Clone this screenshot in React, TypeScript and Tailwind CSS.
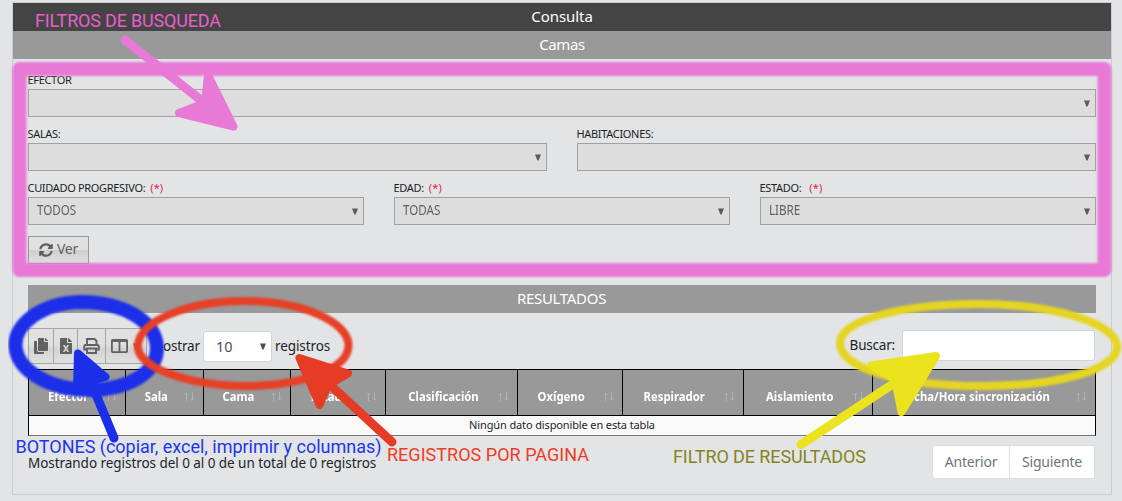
import React from 'react';
import { FaSyncAlt, FaCopy, FaFileExcel } from 'react-icons/fa';

function Caret({ className = '' }: { className?: string }) {
  return (
    <svg className={`h-[7px] w-[6px] shrink-0 ${className}`} viewBox="0 0 6 7">
      <path d="M0 0.5H6L3.6 6.5H2.4Z" fill="currentColor" />
    </svg>
  );
}

function PrintIcon() {
  return (
    <svg className="h-4 w-[17px]" viewBox="0 0 17 16" fill="none" stroke="currentColor" strokeWidth="1.9">
      <path d="M4 7V1H11.500L13.500 3V7M4 11.500H1.200V8.500Q1.200 7 2.700 7H14.300Q15.800 7 15.800 8.500V11.500H13M4 10.500H13V15H4Z" />
    </svg>
  );
}

function ColumnsIcon() {
  return (
    <svg className="h-[14px] w-[17px] shrink-0" viewBox="0 0 17 14" fill="none" stroke="currentColor" strokeWidth="1.8">
      <rect x="0.900" y="0.900" width="15.200" height="12.200" rx="0.800" />
      <path d="M1 2.200H16M8.500 2V13" />
    </svg>
  );
}

function SortIcon() {
  return (
    <svg className="mb-[5px] ml-auto mr-2 h-[9px] w-[11px] shrink-0" viewBox="0 0 11 9" fill="none" stroke="#b2b2b2" strokeWidth="1">
      <path d="M2.500 9V1M1 2.500L2.500 1L4 2.500M8.500 0V8M7 6.500L8.500 8L10 6.500" />
    </svg>
  );
}

function Field({ label, value = '', required = false, gap = 'ml-[5px]' }: {
  label: string; value?: string; required?: boolean; gap?: string;
}) {
  return (
    <div className="flex-1">
      <div className="flex h-[18px] items-center whitespace-nowrap text-[11px] leading-[18px] tracking-[-0.32px] text-[#1b1e21]">
        <span className="-ml-[0.5px]">{label}</span>
        {required && <span className={`${gap} tracking-[0.1px] text-[#d8284a]`}>(*)</span>}
      </div>
      <div className="flex h-7 items-center justify-between border border-[#a0a1a3] bg-[#dddddd] pl-2 pr-[5px] text-[13.500px] leading-[24px] text-[#5f5f5f]">
        <span className="-mt-[2px] origin-left scale-x-[.86]">{value}</span>
        <Caret className="text-[#5c5c5c]" />
      </div>
    </div>
  );
}

const columns = [
  { label: 'Efector', width: 'w-[97px]' },
  { label: 'Sala', width: 'w-[78px]' },
  { label: 'Cama', width: 'w-[87px]' },
  { label: 'Estado', width: 'w-[95px]' },
  { label: 'Clasificación', width: 'w-[132px]' },
  { label: 'Oxígeno', width: 'w-[105px]' },
  { label: 'Respirador', width: 'w-[121px]' },
  { label: 'Aislamiento', width: 'w-[129px]' },
  { label: 'Fecha/Hora sincronización', width: 'w-[223px]' },
];

const toolButton = 'flex items-center border-y border-r border-[#a4a5a7] bg-linear-to-b from-[#e0e0e1] from-45% via-[#d3d3d4] via-60% to-[#e0e0e1]';

function Annotations() {
  return (
    <svg className="pointer-events-none absolute left-0 top-0 h-[501px] w-[1122px]" viewBox="0 0 1122 501" strokeLinecap="round" strokeLinejoin="round">
      <defs>
        <filter id="soft" x="-5%" y="-15%" width="110%" height="130%"><feGaussianBlur stdDeviation="0.8" /></filter>
      </defs>
      <rect x="19.5" y="69" width="1085" height="201" fill="none" stroke="#e879d6" strokeWidth="14" filter="url(#soft)" />
      <g fill="#e879d6" stroke="#e879d6">
        <path d="M125 40L202 101" strokeWidth="9" />
        <path d="M233.5 126.500L208 75L205 103L179 113Z" strokeWidth="8" />
      </g>
      <path d="M15.500 346C14 324 42 303 80 302C123 302 157 321 157 349C156 374 128 389 91 390C50 390 17 371 15.500 346Z" fill="none" stroke="#1b2fe8" strokeWidth="14" filter="url(#soft)" />
      <g fill="#1b2fe8" stroke="#1b2fe8">
        <path d="M114 438L90 380" strokeWidth="9" />
        <path d="M78 353.500L105.500 377L92 381L77 389Z" strokeWidth="8" />
      </g>
      <path d="M138 344C142 319 191 301 244 301C303 301 348 322 348.500 345C349 369 302 386 244 386C186 385 135 367 138 344Z" fill="none" stroke="#e63f28" strokeWidth="8" filter="url(#soft)" />
      <g fill="#e63b24" stroke="#e63b24">
        <path d="M392 442L328 383" strokeWidth="9" />
        <path d="M299.500 358L348 373.500L328 385L319.500 405Z" strokeWidth="8" />
      </g>
      <path d="M840 343C840 319 906 304 978 304C1053 304 1117 323 1117 347C1117 370 1058 386 982 386C902 386 840 369 840 343Z" fill="none" stroke="#e5d524" strokeWidth="8" filter="url(#soft)" />
      <g fill="#eae31d" stroke="#eae31d">
        <path d="M801 444.500L896 382" strokeWidth="9" />
        <path d="M936 356L871 365.500L895 379L901.500 412Z" strokeWidth="8" />
      </g>
      <g fontFamily="Roboto, sans-serif" fontSize="18">
        <text x="35" y="27" textLength="186" fill="#e85fcc">FILTROS DE BUSQUEDA</text>
        <text x="15.500" y="453" textLength="366" fill="#1b36ee">BOTONES (copiar, excel, imprimir y columnas)</text>
        <text x="387" y="461" textLength="202" fill="#ee3d26">REGISTROS POR PAGINA</text>
        <text x="673" y="463" textLength="193" fill="#85851c">FILTRO DE RESULTADOS</text>
      </g>
    </svg>
  );
}

export default function App() {
  return (
    <div className="relative h-[501px] w-[1122px] overflow-hidden bg-[#e3e4e6] pl-3 pt-[2px] font-['Noto_Sans',sans-serif] text-[#212529]">
      <div className="h-[493px] w-[1100px] border border-[#cbccd0]">
        <div className="h-7 bg-[#444444] text-center text-[15px] leading-[27px] tracking-[-0.05px] text-white">Consulta</div>
        <div className="h-7 bg-[#999999] text-center text-[15px] leading-[27px] tracking-[-0.4px] text-white">Camas</div>

        <div className="px-[15px] pt-3">
          <div className="flex flex-col gap-2">
            <div className="flex"><Field label="EFECTOR" /></div>
            <div className="flex gap-[30px]"><Field label="SALAS:" /><Field label="HABITACIONES:" /></div>
            <div className="flex gap-[30px]">
              <Field label="CUIDADO PROGRESIVO:" value="TODOS" required />
              <Field label="EDAD:" value="TODAS" required />
              <Field label="ESTADO:" value="LIBRE" required gap="ml-2" />
            </div>
          </div>
          <button className="mt-[11px] flex h-7 w-[61px] items-center gap-1 border border-[#98999b] bg-linear-to-b from-[#e0e0e0] from-50% via-[#cfcfcf] via-50% to-[#dfdfdf] pl-[10px] text-[14px] leading-[24px] tracking-[-0.3px] text-[#5e5e5e]">
            <FaSyncAlt className="size-[14px]" /><span className="-mt-[2px]">Ver</span>
          </button>

          <div className="mt-[21px] h-7 bg-[#999999] text-center text-[15px] leading-[27px] tracking-[-0.3px] text-white"><span className="mr-px">RESULTADOS</span></div>

          <div className="mt-[15px] flex h-[41px] items-start">
            <div className="flex h-9 text-[#606163]">
              <div className={`${toolButton} w-[26px] border-l pl-1`}><FaCopy className="size-4" /></div>
              <div className={`${toolButton} w-6 justify-center`}><FaFileExcel className="size-4" /></div>
              <div className={`${toolButton} w-7 justify-center`}><PrintIcon /></div>
              <div className={`${toolButton} w-[41px] gap-[5px] pl-[5px]`}><ColumnsIcon /><Caret /></div>
            </div>
            <div className="ml-1 flex h-9 items-center text-[13.500px]">
              <span className="w-[52px] whitespace-nowrap tracking-[-0.2px]">Mostrar</span>
              <div className="flex h-[31px] w-[69px] items-center justify-between rounded-[3px] border border-[#ced4da] bg-white pl-3 pr-[5px] text-[14.500px] leading-[20px] text-[#495057]"><span className="-mt-px">10</span><Caret /></div>
              <span className="ml-[3px] tracking-[-0.1px]">registros</span>
            </div>
            <div className="ml-auto flex h-[35px] items-center gap-[7px] pr-px text-[13.500px]">
              <span className="tracking-[-0.2px]">Buscar:</span>
              <div className="h-[31px] w-[193px] rounded-[3px] border border-[#ced4da] bg-white" />
            </div>
          </div>

          <div className="w-[1068px] border border-black border-b-[#777777]">
            <div className="flex h-[46px] border-b border-black bg-[#999999]">
              {columns.map((c, i) => (
                <div key={c.label} className={`flex shrink-0 items-end pb-[9px] text-[13px] font-bold text-white ${i === columns.length - 1 ? 'flex-1' : `${c.width} border-r border-black`}`}>
                  <div className="flex min-w-0 flex-1 justify-center pl-px">
                    <span className="scale-x-[.87] whitespace-nowrap leading-[19px]">{c.label}</span>
                  </div>
                  <div className="-ml-px w-[19px] shrink-0"><SortIcon /></div>
                </div>
              ))}
            </div>
            <div className="h-[19px] bg-[#fafafa] text-center text-[11px] leading-[18px] tracking-[-0.13px]">Ningún dato disponible en esta tabla</div>
          </div>

          <div className="flex justify-between pr-px pt-[9px]">
            <span className="pt-[8px] text-[13.500px] leading-[20px] tracking-[-0.05px]">Mostrando registros del 0 al 0 de un total de 0 registros</span>
            <div className="flex h-[34px] rounded-[3px] border border-[#dddfe2] bg-white text-center text-[14px] leading-[32px] tracking-[-0.2px] text-[#6c757d]">
              <span className="w-[77px] border-r border-[#dee2e6]">Anterior</span>
              <span className="w-[84px]">Siguiente</span>
            </div>
          </div>
        </div>
      </div>
      <Annotations />
    </div>
  );
}
